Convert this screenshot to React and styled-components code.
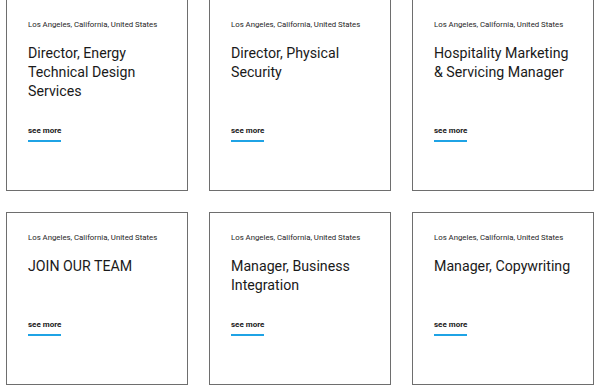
import React from "react";
import styled, { createGlobalStyle } from "styled-components";

const Global = createGlobalStyle`
  html, body { margin: 0; padding: 0; background: #fff; }
  body { font-family: Roboto, "Liberation Sans", sans-serif; color: #1c1c1c; }
`;

const Grid = styled.div`
  display: grid;
  grid-template-columns: repeat(3, 182px);
  column-gap: 21px;
  row-gap: 21px;
  margin-top: -1px;
  padding-left: 6px;
`;

const Card = styled.article`
  box-sizing: border-box;
  display: flex;
  flex-direction: column;
  align-items: flex-start;
  border: 1px solid #6e6e6e;
  padding: 19px 18px 48px 21px;
  background: #fff;
`;

const Location = styled.div`
  font-size: 7.8px;
  line-height: 12px;
  color: #1e1e1e;
  white-space: nowrap;
`;

const Title = styled.h2`
  margin: 13px 0 24px;
  font-size: 14.2px;
  line-height: 19px;
  font-weight: 400;
  color: #1a1a1a;
`;

const More = styled.a`
  margin-top: auto;
  display: block;
  font-size: 8px;
  line-height: 12px;
  font-weight: 700;
  color: #1a1a1a;
  text-decoration: none;
  padding-bottom: 3px;
  border-bottom: 2px solid #1fa3e5;
`;

const jobs = [
  "Director, Energy Technical Design Services",
  "Director, Physical Security",
  "Hospitality Marketing & Servicing Manager",
  "JOIN OUR TEAM",
  "Manager, Business Integration",
  "Manager, Copywriting",
];

export default function App() {
  return (
    <>
      <Global />
      <Grid>
        {jobs.map((j) => (
          <Card key={j}>
            <Location>Los Angeles, California, United States</Location>
            <Title>{j}</Title>
            <More href="#">see more</More>
          </Card>
        ))}
      </Grid>
    </>
  );
}
